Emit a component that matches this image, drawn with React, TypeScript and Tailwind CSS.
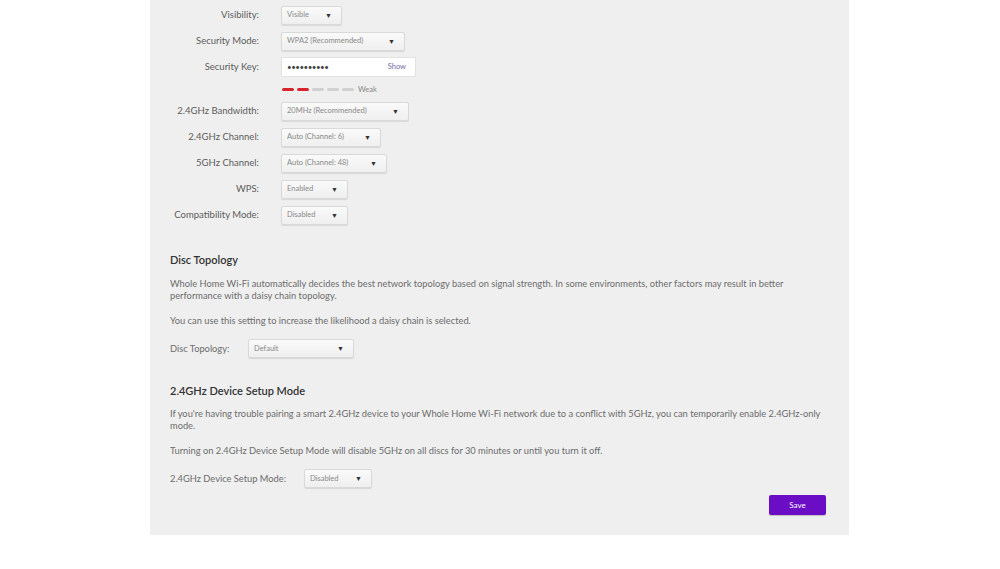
const rows = [
  { label: "Visibility:", value: "Visible", w: "w-[61px]" },
  { label: "Security Mode:", value: "WPA2 (Recommended)", w: "w-[124px]" },
  { label: "Security Key:", value: "key", w: "" },
  { label: "", value: "strength", w: "" },
  { label: "2.4GHz Bandwidth:", value: "20MHz (Recommended)", w: "w-[128px]" },
  { label: "2.4GHz Channel:", value: "Auto (Channel: 6)", w: "w-[100px]" },
  { label: "5GHz Channel:", value: "Auto (Channel: 48)", w: "w-[106px]" },
  { label: "WPS:", value: "Enabled", w: "w-[67px]" },
  { label: "Compatibility Mode:", value: "Disabled", w: "w-[67px]" },
];

function Select({ value, w }: { value: string; w: string }) {
  return (
    <div
      className={`${w} h-[19px] flex items-center justify-between pl-[5px] pr-[9px] bg-gradient-to-b from-[#fafafa] to-[#efefef] border border-[#d9d9d9] rounded-[2px] shadow-[0_1px_1px_rgba(0,0,0,0.1)]`}
    >
      <span className="text-[7.5px] text-[#888]">{value}</span>
      <span className="text-[7px] text-[#333]">▼</span>
    </div>
  );
}

function Row({ label, value, w }: { label: string; value: string; w: string }) {
  let control;
  if (value === "key") {
    control = (
      <div className="w-[135px] h-[20px] bg-white border border-[#e2e2e2] flex items-center justify-between pl-[5px] pr-[9px]">
        <span className="text-[8px] text-[#444] tracking-[-0.5px]">••••••••••</span>
        <span className="text-[7.5px] text-[#7a6aa8]">Show</span>
      </div>
    );
  } else if (value === "strength") {
    control = (
      <div className="flex items-center gap-[3px] pl-[1px]">
        <span className="w-[12px] h-[3px] bg-[#d9232d] rounded-full" />
        <span className="w-[12px] h-[3px] bg-[#d9232d] rounded-full" />
        <span className="w-[12px] h-[3px] bg-[#d0d0d0] rounded-full" />
        <span className="w-[12px] h-[3px] bg-[#d0d0d0] rounded-full" />
        <span className="w-[12px] h-[3px] bg-[#d0d0d0] rounded-full" />
        <span className="text-[7.5px] text-[#888] ml-[1px]">Weak</span>
      </div>
    );
  } else {
    control = <Select value={value} w={w} />;
  }
  return (
    <div className={`flex items-center ${value === "strength" ? "h-[18px] pt-[1px]" : "h-[26px]"}`}>
      <div className="w-[89px] text-right text-[9.5px] text-[#5c5c5c]">{label}</div>
      <div className="ml-[22px]">{control}</div>
    </div>
  );
}

export default function App() {
  return (
    <div className="w-[1000px] h-[569px] bg-white" style={{ fontFamily: "Lato, 'Open Sans', sans-serif" }}>
      <div className="ml-[150px] w-[699px] h-[535px] bg-[#efefef] pl-[20px] pr-[23px]">
        <div className="pt-[2px]">
          {rows.map((r, i) => (
            <Row key={i} {...r} />
          ))}
        </div>

        <h3 className="mt-[25px] text-[11px] font-semibold text-[#333] leading-[14px]">Disc Topology</h3>
        <p className="mt-[11px] text-[9.3px] text-[#6c6c6c] leading-[12px]">
          Whole Home Wi-Fi automatically decides the best network topology based on signal strength. In some environments, other factors may result in better performance with a daisy chain topology.
        </p>
        <p className="mt-[13px] text-[9.3px] text-[#6c6c6c] leading-[12px]">
          You can use this setting to increase the likelihood a daisy chain is selected.
        </p>
        <div className="mt-[12px] flex items-center">
          <span className="w-[78px] text-[9.3px] text-[#6c6c6c]">Disc Topology:</span>
          <Select value="Default" w="w-[106px]" />
        </div>

        <h3 className="mt-[26px] text-[11px] font-semibold text-[#333] leading-[14px]">2.4GHz Device Setup Mode</h3>
        <p className="mt-[10px] text-[9.3px] text-[#6c6c6c] leading-[12px]">
          If you're having trouble pairing a smart 2.4GHz device to your Whole Home Wi-Fi network due to a conflict with 5GHz, you can temporarily enable 2.4GHz-only mode.
        </p>
        <p className="mt-[13px] text-[9.3px] text-[#6c6c6c] leading-[12px]">
          Turning on 2.4GHz Device Setup Mode will disable 5GHz on all discs for 30 minutes or until you turn it off.
        </p>
        <div className="mt-[12px] flex items-center">
          <span className="w-[134px] text-[9.3px] text-[#6c6c6c]">2.4GHz Device Setup Mode:</span>
          <Select value="Disabled" w="w-[68px]" />
        </div>

        <div className="mt-[7px] flex justify-end">
          <button className="w-[57px] h-[20px] bg-[#6a0dc4] rounded-[2px] text-white text-[8px] shadow-[0_1px_1px_rgba(0,0,0,0.2)]">
            Save
          </button>
        </div>
      </div>
    </div>
  );
}
